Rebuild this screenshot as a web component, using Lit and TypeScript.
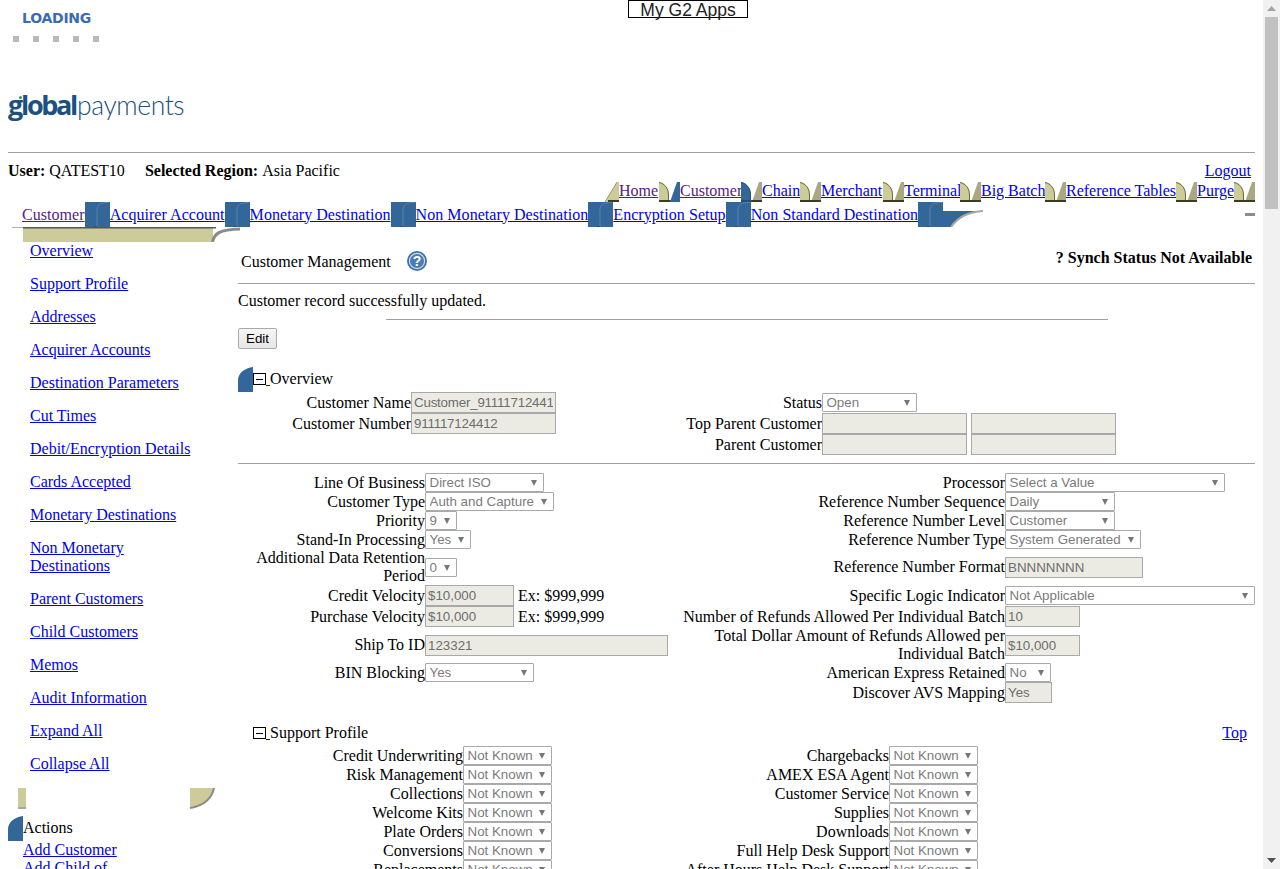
import { LitElement, html, css, svg } from 'lit';
import { customElement } from 'lit/decorators.js';

type Field = {
  label: string;
  sel?: string;
  input?: string;
  w?: number;
  note?: string;
};

const primaryTabs = [
  { t: 'Home', w: 40, visited: true, after: 'kb' },
  { t: 'Customer', w: 61, visited: true, after: 'bk' },
  { t: 'Chain', w: 38, after: 'kk' },
  { t: 'Merchant', w: 62, after: 'kk' },
  { t: 'Terminal', w: 56, after: 'kk' },
  { t: 'Big Batch', w: 64, after: 'kk' },
  { t: 'Reference Tables', w: 110, after: 'kk' },
  { t: 'Purge', w: 37, after: 'kk' },
];

const secondaryTabs = [
  'Acquirer Account',
  'Monetary Destination',
  'Non Monetary Destination',
  'Encryption Setup',
  'Non Standard Destination',
];

const sideLinks = [
  'Overview',
  'Support Profile',
  'Addresses',
  'Acquirer Accounts',
  'Destination Parameters',
  'Cut Times',
  'Debit/Encryption Details',
  'Cards Accepted',
  'Monetary Destinations',
  'Non Monetary Destinations',
  'Parent Customers',
  'Child Customers',
  'Memos',
  'Audit Information',
  'Expand All',
  'Collapse All',
];

const mainRows: [Field, Field][] = [
  [{ label: 'Line Of Business', sel: 'Direct ISO', w: 119 }, { label: 'Processor', sel: 'Select a Value', w: 220 }],
  [{ label: 'Customer Type', sel: 'Auth and Capture', w: 129 }, { label: 'Reference Number Sequence', sel: 'Daily', w: 110 }],
  [{ label: 'Priority', sel: '9', w: 32 }, { label: 'Reference Number Level', sel: 'Customer', w: 110 }],
  [{ label: 'Stand-In Processing', sel: 'Yes', w: 46 }, { label: 'Reference Number Type', sel: 'System Generated', w: 136 }],
  [{ label: 'Additional Data Retention Period', sel: '0', w: 32 }, { label: 'Reference Number Format', input: 'BNNNNNNN', w: 138 }],
  [{ label: 'Credit Velocity', input: '$10,000', w: 89, note: 'Ex: $999,999' }, { label: 'Specific Logic Indicator', sel: 'Not Applicable', w: 250 }],
  [{ label: 'Purchase Velocity', input: '$10,000', w: 89, note: 'Ex: $999,999' }, { label: 'Number of Refunds Allowed Per Individual Batch', input: '10', w: 75 }],
  [{ label: 'Ship To ID', input: '123321', w: 243 }, { label: 'Total Dollar Amount of Refunds Allowed per Individual Batch', input: '$10,000', w: 75 }],
  [{ label: 'BIN Blocking', sel: 'Yes', w: 109 }, { label: 'American Express Retained', sel: 'No', w: 46 }],
  [{ label: '' }, { label: 'Discover AVS Mapping', input: 'Yes', w: 47 }],
];

const supportRows: [string, string][] = [
  ['Credit Underwriting', 'Chargebacks'],
  ['Risk Management', 'AMEX ESA Agent'],
  ['Collections', 'Customer Service'],
  ['Welcome Kits', 'Supplies'],
  ['Plate Orders', 'Downloads'],
  ['Conversions', 'Full Help Desk Support'],
  ['Replacements', 'After Hours Help Desk Support'],
];

const KHAKI = '#cdcb9a';
const BLUE = '#336699';

function roundEnd(color: string) {
  const dark = color === KHAKI ? '#6d6b3c' : '#26507a';
  return svg`<path d="M0 0C6 1 10 7 10 13V20H0Z" fill=${color}/>
    <path d="M0 .5C6 1.5 9.5 7 9.5 13V18" fill="none" stroke=${dark}/>
    <rect y="18" width="11" height="2" fill=${color === KHAKI ? '#3c3c20' : '#26507a'}/>`;
}

function slantStart(color: string) {
  return svg`<path d="M11 20L18 0H21V20Z" fill=${color === KHAKI ? '#aaa884' : color}/>
    <rect x="11" y="18" width="10" height="2" fill=${color === KHAKI ? '#3c3c20' : color}/>`;
}

// the little bent-tab joints between the top level links
function primaryCap(kind: string) {
  const left = kind[0] === 'b' ? BLUE : KHAKI;
  const right = kind[1] === 'b' ? BLUE : KHAKI;
  return html`<svg class="cap" width="21" height="20" viewBox="0 0 21 20">
    ${roundEnd(left)}${slantStart(right)}
  </svg>`;
}

function blueJoint() {
  return html`<svg class="joint" width="25" height="25" viewBox="0 0 25 25">
    <rect width="25" height="25" fill=${BLUE}/>
    <path d="M12 25V8C12 3 15 .5 24 .5" fill="none" stroke="#4f8aa8"/>
    <path d="M9 24.5H12" stroke="#26507a"/>
  </svg>`;
}

function blueTab() {
  return html`<svg class="tab" width="15" height="25" viewBox="0 0 15 25">
    <path d="M0 25V13C0 6 7 1 15 0V25Z" fill=${BLUE}/>
  </svg>`;
}

function collapseBox() {
  return html`<span class="toggle"><span class="box"><span></span></span><a class="gap" href="#"></a></span>`;
}

@customElement('app-root')
export class AppRoot extends LitElement {
  static styles = css`
    :host {
      display: flex;
      width: 1280px;
      height: 869px;
      overflow: hidden;
      background: #fff;
      color: #000;
      font: 16px/18px 'Liberation Serif', serif;
    }
    a { color: #0000ee; text-decoration: underline; white-space: nowrap; }
    a.visited { color: #551a8b; }
    svg { display: block; flex: none; }

    .page { width: 1263px; flex: none; display: flex; flex-direction: column; }
    .page > * { flex: none; }

    .scrollbar {
      width: 17px;
      flex: none;
      background: #f1f1f1;
      display: flex;
      flex-direction: column;
      align-items: center;
    }
    .thumb { width: 13px; height: 192px; background: #c1c1c1; }
    .arrow { height: 17px; display: flex; align-items: center; justify-content: center; flex: none; }
    .spacer { flex: 1; }

    .masthead { height: 152px; padding-left: 8px; box-sizing: border-box; display: flex; flex-direction: column; }
    .topline { display: flex; height: 88px; flex: none; }
    .loader { width: 105px; padding-left: 5px; padding-top: 11px; box-sizing: border-box; flex: none; }
    .loader b {
      display: block;
      margin-left: 9px;
      font: bold 14px/15px 'DejaVu Sans', sans-serif;
      letter-spacing: -0.25px;
      color: #3a6cb4;
    }
    .dots { display: flex; gap: 14px; margin-top: 10px; }
    .dots i { width: 6px; height: 6px; background: #b9b9b9; }
    .apps {
      margin-left: 515px;
      width: 120px;
      height: 18px;
      box-sizing: border-box;
      border: 1px solid #000;
      text-align: center;
      font: 17.5px/18px 'Liberation Sans', sans-serif;
      color: #222;
    }
    .logo {
      position: relative;
      align-self: flex-start;
      color: #1b5080;
      font: 27px/34px 'Open Sans', sans-serif;
      white-space: nowrap;
    }
    .logo b { font-weight: 700; letter-spacing: -2.3px; }
    .logo span { font-weight: 300; font-size: 26.5px; font-family: 'Lato', sans-serif; letter-spacing: -0.4px; margin-left: 1px; }
    .logo i {
      position: absolute;
      left: 11px;
      top: 8px;
      width: 3px;
      height: 3px;
      border-radius: 50%;
      background: #2f9a5a;
    }

    hr { border: 0; margin: 0; height: 1px; background: #a0a0a0; flex: none; }
    .rule-top { margin: 0 8px; }

    .userline {
      display: flex;
      padding: 9px 4px 0 8px;
      margin-right: 8px;
      height: 20px;
    }
    .userline b { margin-left: 20px; }
    .userline b:first-child { margin-left: 0; }
    .userline .logout { margin-left: auto; }
    .userline span { margin-left: 4px; }

    .tabs1 {
      display: flex;
      justify-content: flex-end;
      align-items: flex-start;
      height: 20px;
      padding-right: 8px;
    }
    .tabs1 a { flex: none; }
    .tabs2 { display: flex; align-items: center; height: 25px; padding-left: 22px; padding-right: 8px; }
    .tabs2 a { letter-spacing: 0.05px; }
    .dash { margin-left: auto; width: 10px; height: 3px; background: #8c8c8c; }

    .body { display: flex; flex: 1 !important; min-height: 0; }

    .side { width: 238px; flex: none; display: flex; flex-direction: column; }
    .side > * { flex: none; }
    .side-top { margin-left: 12px; }
    .side-links {
      display: flex;
      flex-direction: column;
      gap: 15px;
      padding-left: 30px;
      width: 165px;
    }
    .side-links a { white-space: normal; }
    .side-bottom { margin: 15px 0 0 18px; }
    .actions { display: flex; margin: 6px 0 0 8px; }
    .actions-list { padding-top: 3px; }
    .actions-list div { margin-bottom: 4px; }
    .actions-list a { display: block; width: 110px; white-space: normal; }

    .main { width: 1017px; flex: none; display: flex; flex-direction: column; }
    .main > * { flex: none; }
    .heading { display: flex; height: 56px; box-sizing: border-box; padding: 22px 3px 0 3px; }
    .heading .title { padding-top: 4px; }
    .help { margin: 1px 0 0 15px; }
    .status { margin-left: auto; font-weight: 700; }
    .message { padding: 8px 0 9px; }
    .rule-mid { width: 722px; margin-left: 148px; }
    button {
      display: block;
      margin-top: 8px;
      width: 39px;
      height: 21px;
      padding: 0;
      background: linear-gradient(#f6f6f6, #e6e6e6);
      border: 1px solid #a9a9a9;
      border-radius: 2px;
      font: 13.33px 'Liberation Sans', sans-serif;
      color: #000;
    }

    .section-head { display: flex; align-items: flex-start; height: 25px; margin-top: 18px; }
    .section-head .label { padding-top: 3px; }
    .toggle { display: flex; align-items: flex-end; flex: none; margin-top: 6px; }
    .box {
      flex: none;
      width: 13px;
      height: 12px;
      box-sizing: border-box;
      border: 1px solid #000;
      display: flex;
      align-items: center;
      justify-content: center;
    }
    .box span { width: 7px; height: 1px; background: #000; }
    a.gap { display: block; width: 4px; height: 1px; background: #0000ee; margin-bottom: -1px; }

    .overview {
      display: grid;
      grid-template-columns: 173px 145px 266px 1fr;
      grid-auto-rows: 21px;
      align-items: center;
    }
    .overview > input { width: 145px; letter-spacing: -0.2px; }
    .pair { display: flex; gap: 4px; }

    .fields {
      display: grid;
      grid-template-columns: 187px 255px 325px 250px;
      grid-template-rows: 19px 19px 19px 19px 36px 21px 21px 36px 19px 21px;
      align-items: center;
    }
    .main > .rule-form { margin: 8px 0 9px; }
    .lbl { text-align: right; }
    .ctl { display: flex; align-items: center; gap: 4px; min-width: 0; }

    input, select {
      font: 13.33px/17px 'Liberation Sans', sans-serif;
      box-sizing: border-box;
      margin: 0;
      border: 1px solid #a9a9a9;
      color: #6d6d6d;
      opacity: 1;
    }
    input { height: 21px; padding: 0 2px; background: #ebebe4; }
    select {
      height: 19px;
      padding: 0 0 0 3.5px;
      appearance: none;
      background: #fff;
      border-radius: 1px;
      display: block;
      color: #7b7b7b;
    }
    .sel { position: relative; display: block; }
    .sel::after {
      content: '';
      position: absolute;
      top: 7px;
      right: 7px;
      border-left: 3.5px solid transparent;
      border-right: 3.5px solid transparent;
      border-top: 6px solid #777;
    }

    .support-head { display: flex; height: 22px; margin-top: 21px; padding-left: 15px; align-items: flex-start; }
    .support-head .toggle { margin-top: 3px; }
    .support-head .top { margin-left: auto; margin-right: 8px; }
    .support {
      display: grid;
      grid-template-columns: 225px 89px 337px 89px;
      grid-auto-rows: 19px;
      align-items: center;
    }
  `;

  renderCtl(f: Field) {
    if (f.sel) {
      return html`<span class="sel" style="width:${f.w}px">
        <select disabled style="width:${f.w}px"><option>${f.sel}</option></select>
      </span>`;
    }
    if (f.input) {
      return html`<input disabled style="width:${f.w}px" .value=${f.input} />`;
    }
    return '';
  }

  renderPair(f: Field) {
    return html`<div class="lbl">${f.label}</div>
      <div class="ctl">${this.renderCtl(f)}${f.note ? html`<span>${f.note}</span>` : ''}</div>`;
  }

  render() {
    return html`
      <div class="page">
        <div class="masthead">
          <div class="topline">
            <div class="loader">
              <b>LOADING</b>
              <div class="dots"><i></i><i></i><i></i><i></i><i></i></div>
            </div>
            <div class="apps">My G2 Apps</div>
          </div>
          <div class="logo"><i></i><b>global</b><span>payments</span></div>
        </div>
        <hr class="rule-top" />

        <div class="userline">
          <b>User:</b><span>QATEST10</span>
          <b>Selected Region:</b><span>Asia Pacific</span>
          <a class="logout" href="#">Logout</a>
        </div>

        <div class="tabs1">
          <svg class="cap" width="14" height="20" viewBox="0 0 14 20">
            <path d="M0 20L12 0H14V20Z" fill=${KHAKI}/>
            <path d="M0 20L12 0" stroke="#9a9870" fill="none"/>
            <rect x="3" y="18" width="11" height="2" fill="#3c3c20"/>
          </svg>
          ${primaryTabs.map(
            (t) => html`<a class=${t.visited ? 'visited' : ''} style="width:${t.w}px" href="#">${t.t}</a>${primaryCap(t.after)}`
          )}
        </div>

        <div class="tabs2">
          <a class="visited" href="#">Customer</a>${blueJoint()}
          ${secondaryTabs.map((t) => html`<a href="#">${t}</a>${blueJoint()}`)}
          <svg width="40" height="25" viewBox="0 0 40 25">
            <path d="M0 9H40C26 10 16 14 8 25H0Z" fill=${BLUE}/>
            <path d="M8 25C16 14 26 10 40 9" fill="none" stroke="#a8a8a8" stroke-width="2"/>
          </svg>
          <i class="dash"></i>
        </div>

        <div class="body">
          <nav class="side">
            <svg class="side-top" width="228" height="15" viewBox="0 0 228 15">
              <rect x="11" y="1" width="190" height="14" fill=${KHAKI}/>
              <path d="M0 .5H11" stroke="#b0b0b0"/>
              <path d="M11 .75H204" stroke="#555" stroke-width="1.5"/>
              <path d="M200.5 15C202 7 207 2.5 228 2" fill="none" stroke="#8a8a8a" stroke-width="3"/>
            </svg>
            <div class="side-links">
              ${sideLinks.map((l) => html`<a href="#">${l}</a>`)}
            </div>
            <svg class="side-bottom" width="197" height="22" viewBox="0 0 197 22">
              <rect width="8" height="19" fill=${KHAKI}/>
              <path d="M0 20H8" stroke="#aaa" stroke-width="2"/>
              <path d="M172 0H196C194 10 186 18 172 19Z" fill=${KHAKI}/>
              <path d="M196 0C194 10 186 18 172 20" fill="none" stroke="#8a8a8a" stroke-width="2"/>
            </svg>
            <div class="actions">
              ${blueTab()}
              <div class="actions-list">
                <div>Actions</div>
                <a href="#">Add Customer</a>
                <a href="#">Add Child of Customer</a>
              </div>
            </div>
          </nav>

          <main class="main">
            <div class="heading">
              <span class="title">Customer Management</span>
              <svg class="help" width="22" height="22" viewBox="0 0 22 22">
                <circle cx="11" cy="11" r="10" fill="#3f72a8"/>
                <circle cx="11" cy="11" r="8.2" fill="#fff" opacity=".75"/>
                <circle cx="11" cy="11" r="7" fill="#4a7db5"/>
                <text x="11" y="16" text-anchor="middle" fill="#fff" font-family="Liberation Sans" font-weight="700" font-size="14">?</text>
              </svg>
              <span class="status">? Synch Status Not Available</span>
            </div>
            <hr />
            <div class="message">Customer record successfully updated.</div>
            <hr class="rule-mid" />
            <button disabled>Edit</button>

            <div class="section-head">
              ${blueTab()}${collapseBox()}<span class="label">Overview</span>
            </div>
            <div class="overview">
              <div class="lbl">Customer Name</div>
              <input disabled value="Customer_911117124412" />
              <div class="lbl">Status</div>
              <div class="ctl">${this.renderCtl({ label: '', sel: 'Open', w: 95 })}</div>

              <div class="lbl">Customer Number</div>
              <input disabled value="911117124412" />
              <div class="lbl">Top Parent Customer</div>
              <div class="pair"><input disabled style="width:145px" /><input disabled style="width:145px" /></div>

              <div></div><div></div>
              <div class="lbl">Parent Customer</div>
              <div class="pair"><input disabled style="width:145px" /><input disabled style="width:145px" /></div>
            </div>
            <hr class="rule-form" />

            <div class="fields">
              ${mainRows.map(([l, r]) => html`${this.renderPair(l)}${this.renderPair(r)}`)}
            </div>

            <div class="support-head">
              ${collapseBox()}<span>Support Profile</span>
              <a class="top" href="#">Top</a>
            </div>
            <div class="support">
              ${supportRows.map(
                ([l, r]) => html`${this.renderPair({ label: l, sel: 'Not Known', w: 89 })}${this.renderPair({ label: r, sel: 'Not Known', w: 89 })}`
              )}
            </div>
          </main>
        </div>
      </div>

      <div class="scrollbar">
        <div class="arrow"><svg width="9" height="5" viewBox="0 0 9 5"><path d="M0 5L4.5 0L9 5Z" fill="#a3a3a3"/></svg></div>
        <div class="thumb"></div>
        <div class="spacer"></div>
        <div class="arrow"><svg width="9" height="5" viewBox="0 0 9 5"><path d="M0 0L4.5 5L9 0Z" fill="#505050"/></svg></div>
      </div>
    `;
  }
}
